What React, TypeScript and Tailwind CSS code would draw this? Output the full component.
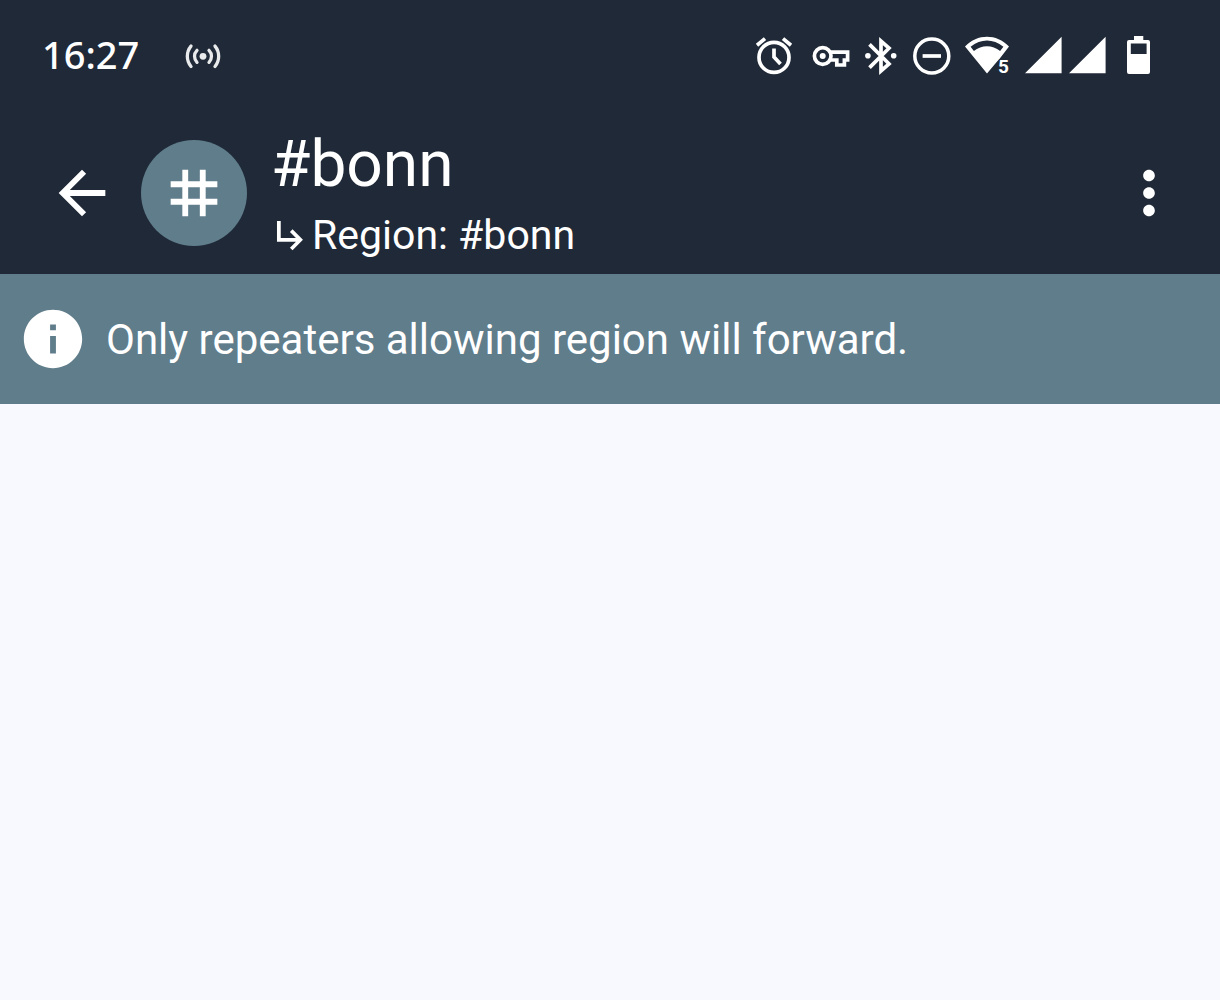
import type { ReactNode } from "react";

interface StatusIconProps {
  label: string;
  viewBox: string;
  className: string;
  children: ReactNode;
}

function StatusIcon({ label, viewBox, className, children }: StatusIconProps) {
  return (
    <svg
      role="img"
      aria-label={label}
      viewBox={viewBox}
      className={`h-11 shrink-0 ${className}`}
      fill="none"
      stroke="currentColor"
      strokeWidth="3.7"
    >
      {children}
    </svg>
  );
}

function MaterialIcon({ path, className }: { path: string; className: string }) {
  return (
    <svg aria-hidden="true" viewBox="0 0 24 24" fill="currentColor" className={`shrink-0 ${className}`}>
      <path d={path} />
    </svg>
  );
}

const icons = {
  back: "M20 11H7.83l5.59-5.59L12 4l-8 8 8 8 1.41-1.41L7.83 13H20v-2z",
  tag: "M20 10V8h-4V4h-2v4h-4V4H8v4H4v2h4v4H4v2h4v4h2v-4h4v4h2v-4h4v-2h-4v-4h4zm-6 4h-4v-4h4v4z",
  subdirectory: "M18.7 14.5l-6.1 6.2-1.5-1.5L14.6 15.600H3.500V3.500h2.200v9.900h8.900l-3.500-3.500L12.600 8.400l6.100 6.100z",
  more: "M12 8c1.1 0 2-.9 2-2s-.9-2-2-2-2 .9-2 2 .9 2 2 2zm0 2c-1.1 0-2 .9-2 2s.9 2 2 2 2-.9 2-2-.9-2-2-2zm0 6c-1.1 0-2 .9-2 2s.9 2 2 2 2-.9 2-2-.9-2-2-2z",
  info: "M12 2C6.48 2 2 6.48 2 12s4.48 10 10 10 10-4.48 10-10S17.52 2 12 2zm1 15h-2v-6h2v6zm0-8h-2V7h2v2z",
};

function StatusBar() {
  return (
    <div className="flex h-28 items-center justify-between pr-[62px] pl-[42px]">
      <div className="flex items-center gap-11">
        <time className="pb-1 font-['Noto_Sans',sans-serif] text-[38px] leading-12 font-medium">16:27</time>
        <StatusIcon label="Hotspot" viewBox="0 0 40 44" className="w-10">
          <g strokeWidth="3.3" strokeLinecap="round" opacity="0.9">
            <circle cx="20" cy="22.3" r="3.4" fill="currentColor" stroke="none" />
            <path d="M14 16.3a8.5 8.5 0 0 0 0 12M26 16.3a8.5 8.5 0 0 1 0 12" />
            <path d="M8 12.1a16 16 0 0 0 0 20.4M32 12.1a16 16 0 0 1 0 20.4" />
          </g>
        </StatusIcon>
      </div>

      <div className="flex items-center gap-3">
        <StatusIcon label="Alarm" viewBox="0 0 44 44" className="w-11">
          <circle cx="20" cy="23.4" r="15" />
          <path d="M20 14.500V23l6.500 7" />
          <path d="M3 11.200l8-6.600M37 11.200l-8-6.600" />
        </StatusIcon>
        <StatusIcon label="VPN" viewBox="0 0 42 44" className="w-[42px]">
          <circle cx="12.7" cy="22" r="8.3" />
          <circle cx="12.7" cy="22" r="3" fill="currentColor" stroke="none" />
          <path d="M20 18.200h17.600V26h-3.200v5h-7.600v-5H20" />
        </StatusIcon>
        <StatusIcon label="Bluetooth" viewBox="0 0 36 44" className="w-9">
          <path d="M5.500 10.400L25 29.800l-8 7V7.200l8 7L5.500 33.600" />
          <g fill="currentColor" stroke="none">
            <circle cx="3.9" cy="21.8" r="2.8" />
            <circle cx="29.7" cy="21.8" r="2.8" />
          </g>
        </StatusIcon>
        <StatusIcon label="Do not disturb" viewBox="0 0 40 44" className="w-10">
          <circle cx="19.8" cy="22" r="17" strokeWidth="3.5" />
          <path d="M10.600 22H29" />
        </StatusIcon>
        <StatusIcon label="Wi-Fi 5" viewBox="0 0 48 44" className="w-12">
          <g fill="currentColor" stroke="none">
            <path
              fillRule="evenodd"
              d="M1 12.500C13.500 -.500 32.500 -.500 45 12.500L35 25.500L33.500 27L23 39.500zM6.600 12.800L9.900 17C17.500 10.500 28.500 10.500 36.100 17L39.400 12.800C29 4.300 17 4.300 6.600 12.800z"
            />
            <text
              x="34"
              y="39"
              fontSize="19"
              fontWeight="700"
              fontFamily="Roboto, sans-serif"
              stroke="#1f2937"
              strokeWidth="2"
              paintOrder="stroke"
            >
              5
            </text>
          </g>
        </StatusIcon>
        <StatusIcon label="Mobile signal" viewBox="0 0 82 44" className="w-[82px]">
          <path d="M1 39.300H37.600V2.700zM45 39.300H81.600V2.700z" fill="currentColor" stroke="none" />
        </StatusIcon>
        <StatusIcon label="Battery" viewBox="0 0 40 44" className="w-10">
          <path
            d="M16 2h9.300v4H30a2 2 0 0 1 2 2v30a2 2 0 0 1-2 2H11a2 2 0 0 1-2-2V8a2 2 0 0 1 2-2h5zM12.800 9.400v10.600h15.800V9.400z"
            fill="currentColor"
            fillRule="evenodd"
            stroke="none"
          />
        </StatusIcon>
      </div>
    </div>
  );
}

export default function App() {
  return (
    <div className="min-h-screen bg-[#f8f9ff] font-['Roboto',sans-serif] text-white">
      <header className="bg-[#1f2937]">
        <StatusBar />

        <div className="flex h-[162px] items-center gap-6 pr-9 pl-[47px]">
          <button type="button" aria-label="Back">
            <MaterialIcon path={icons.back} className="size-[70px]" />
          </button>
          <div className="flex size-[106px] shrink-0 items-center justify-center rounded-full bg-[#607d8b]">
            <MaterialIcon path={icons.tag} className="size-[70px]" />
          </div>
          <div className="min-w-0 flex-1">
            <h1 className="text-[64px] leading-[84px]">#bonn</h1>
            <p className="flex items-center text-[41px] leading-14">
              <MaterialIcon path={icons.subdirectory} className="size-[41px]" />
              Region: #bonn
            </p>
          </div>
          <button type="button" aria-label="More options">
            <MaterialIcon path={icons.more} className="size-[70px]" />
          </button>
        </div>
      </header>

      {/* Region notice */}
      <div role="status" className="flex min-h-[130px] items-center gap-[18px] bg-[#607d8b] px-[18px]">
        <MaterialIcon path={icons.info} className="size-[70px]" />
        <p className="pt-0.5 text-[42px] leading-12">Only repeaters allowing region will forward.</p>
      </div>

      <main />
    </div>
  );
}
